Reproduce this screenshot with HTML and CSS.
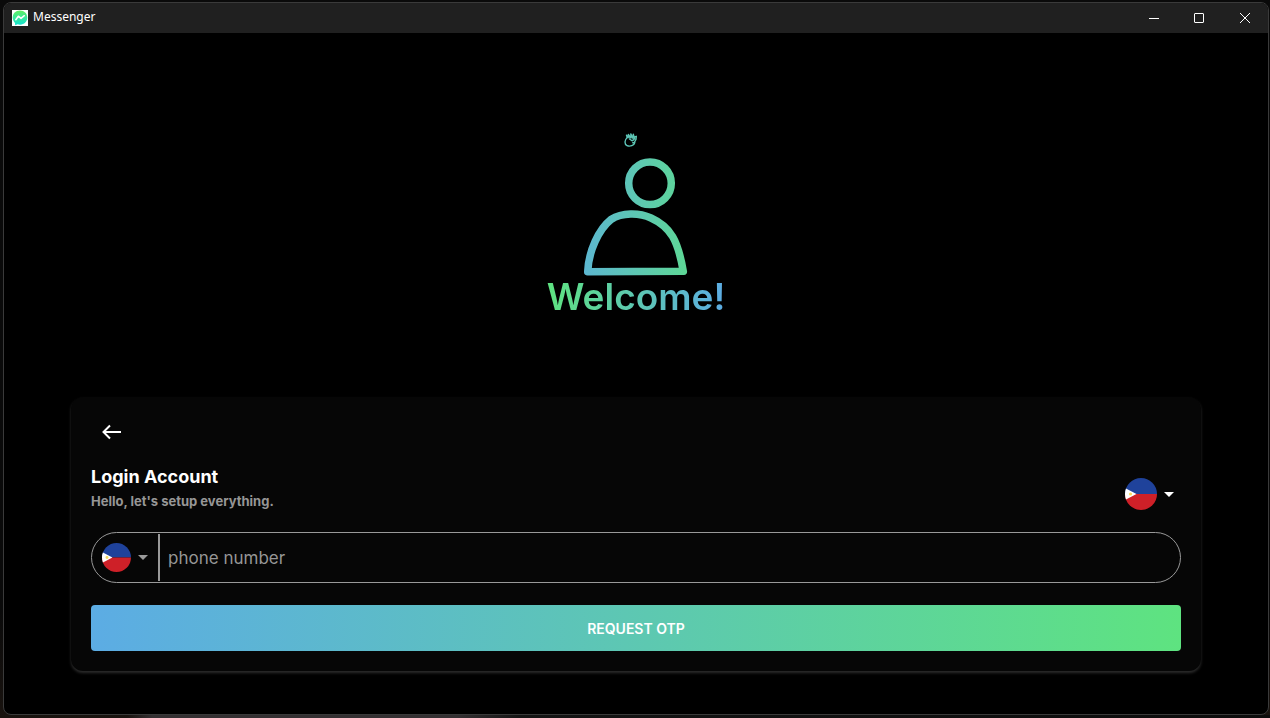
FILE: index.html
```html
<!DOCTYPE html>
<html lang="en">
<head>
<meta charset="utf-8">
<title>Messenger</title>
<link rel="stylesheet" href="styles.css">
</head>
<body>
<svg width="0" height="0" class="defs" aria-hidden="true">
  <symbol id="flag" viewBox="0 0 32 32">
    <clipPath id="disc"><circle cx="16" cy="16" r="16"/></clipPath>
    <g clip-path="url(#disc)">
      <rect width="32" height="16" fill="#1f429b"/>
      <rect y="16" width="32" height="16" fill="#ce2028"/>
      <path d="M-1 9.500L11.500 16L-1 22.500z" fill="#fff"/>
      <circle cx="5.500" cy="16" r="1.600" fill="#f8dc60"/>
    </g>
  </symbol>
</svg>
<div class="window">
  <header class="titlebar">
    <svg class="app-icon" viewBox="0 0 16 16" aria-hidden="true">
      <defs><linearGradient id="app" x1="0" y1="0" x2="0" y2="1"><stop offset="0" stop-color="#62ee62"/><stop offset="1" stop-color="#10e3d5"/></linearGradient></defs>
      <rect width="16" height="16" fill="#fff"/>
      <path d="M8 .5C3.600 .5.700 3.600.700 7.600c0 2.200.9 4 2.300 5.300l.2 2.400 2.400-1c.8.3 1.600.4 2.400.4 4.400 0 7.300-3.100 7.300-7.100S12.400.5 8 .5z" fill="url(#app)"/>
      <path d="M3.800 9.700L6.300 6.200L9 8.400L12.300 5.700" fill="none" stroke="#fff" stroke-width="1.500" stroke-linejoin="round" stroke-linecap="round"/>
    </svg>
    <span class="app-name">Messenger</span>
    <button class="win-btn" aria-label="Minimize"><svg viewBox="0 0 12 12"><path d="M2 6.500H12"/></svg></button>
    <button class="win-btn" aria-label="Maximize"><svg viewBox="0 0 12 12"><rect x="1.500" y="1.500" width="9" height="9" rx=".5"/></svg></button>
    <button class="win-btn" aria-label="Close"><svg viewBox="0 0 12 12"><path d="M1 1L11 11M11 1L1 11"/></svg></button>
  </header>
  <main class="content">
    <section class="hero">
      <svg class="person" viewBox="576 130 120 147" fill="none" aria-hidden="true">
        <defs><linearGradient id="body" gradientUnits="userSpaceOnUse" x1="550" y1="0" x2="725" y2="0"><stop offset="0" stop-color="#5cace4"/><stop offset="1" stop-color="#5ee380"/></linearGradient></defs>
        <g stroke="url(#body)" stroke-linejoin="round" stroke-linecap="round">
          <circle cx="650" cy="184.300" r="21.300" stroke-width="7.500"/>
          <path d="M587.700 272.800C588.500 252 599 230 611 220.500C622 213.500 639 213.500 651 219C671 228 678 242 683.300 272.300Z" stroke-width="7.500"/>
          <g stroke-width="1.400">
            <path d="M627.300 138.500C624.300 141 624.300 145.500 627 146.600C630 148 634.200 146.500 634.800 143.600L632.800 143.800"/>
            <path d="M627.300 138.500L626.500 136.200L629 138.500M629 138.500L628.300 135.400L631 139M631 138.500L630.800 134.900L633 139.500M633 138.300L633.300 135.300L634.600 140M634.600 138L636.300 137.300L636 140.500L634.300 143.400M629.500 140L632 141.800L633.500 140.800"/>
          </g>
        </g>
      </svg>
      <h1 class="welcome">Welcome!</h1>
    </section>
    <form class="card">
      <button type="button" class="back" aria-label="Back">
        <svg viewBox="0 0 20 16"><path d="M19 8H2M8 1.500L1.500 8L8 14.500"/></svg>
      </button>
      <div class="heading">
        <div>
          <h2 class="title">Login Account</h2>
          <p class="subtitle">Hello, let's setup everything.</p>
        </div>
        <div class="picker region">
          <svg class="flag"><use href="#flag"/></svg>
          <svg class="caret" viewBox="0 0 10 5"><path d="M0 0H10L5 5z"/></svg>
          <select aria-label="Region"><option value="PH">PH</option></select>
        </div>
      </div>
      <div class="phone">
        <div class="picker code">
          <svg class="flag"><use href="#flag"/></svg>
          <svg class="caret" viewBox="0 0 10 5"><path d="M0 0H10L5 5z"/></svg>
          <select aria-label="Country code"><option value="PH">PH</option></select>
        </div>
        <input type="tel" placeholder="phone number" aria-label="phone number">
      </div>
      <button type="submit" class="submit">REQUEST OTP</button>
    </form>
  </main>
</div>
</body>
</html>
```
FILE: styles.css
```css
* { box-sizing: border-box; }
body {
  margin: 0;
  min-height: 100vh;
  padding: 2px 1px 3px 3px;
  display: flex;
  background: linear-gradient(90deg, transparent 10%, #343032 12%, #343032 36%, #141414 41%, #0c0c0c 100%) bottom / 100% 3px no-repeat, linear-gradient(#0a0a0a 85%, #19130f);
  color: #fff;
  font-family: Inter, "Liberation Sans", sans-serif;
}
button, input { font: inherit; color: inherit; }
button { padding: 0; border: 0; background: none; }
.defs { position: absolute; }
.window {
  flex: 1;
  display: flex;
  flex-direction: column;
  border: 1px solid #3a3a3a;
  border-radius: 8px;
  overflow: hidden;
  background: #000;
}
.titlebar {
  display: flex;
  align-items: center;
  height: 30px;
  padding-left: 8px;
  background: #202020;
}
.app-icon { width: 16px; height: 16px; }
.app-name {
  flex: 1;
  padding-bottom: 2px;
  margin-left: 5px;
  font: 12px/16px "Noto Sans", "Open Sans", sans-serif;
}
.win-btn { display: grid; place-items: center; width: 46px; height: 28px; }
.win-btn svg { width: 12px; height: 12px; fill: none; stroke: #fff; }
.content {
  flex: 1;
  display: flex;
  flex-direction: column;
  padding: 0 67px 43px;
}
.hero {
  flex: 1;
  display: flex;
  flex-direction: column;
  align-items: center;
  justify-content: center;
  padding-top: 17px;
}
.person { width: 120px; height: 147px; }
.welcome {
  margin: 0;
  font-size: 37px;
  font-weight: 600;
  line-height: 42px;
  background: linear-gradient(90deg, #5ee380, #5cace4);
  background-clip: text;
  -webkit-background-clip: text;
  color: transparent;
}
.card {
  display: flex;
  flex-direction: column;
  padding: 20px;
  border-radius: 12px;
  background: #060606;
  box-shadow: 0 2px 3px #2c2c2c;
}
.back { display: grid; place-items: center; width: 42px; height: 30px; }
.back svg { width: 20px; height: 16px; fill: none; stroke: #fff; stroke-width: 2; }
.heading {
  display: flex;
  align-items: center;
  justify-content: space-between;
  height: 64px;
  margin: 9px 0 12px;
}
.title { margin: 0; font-size: 18px; font-weight: 700; line-height: 24px; }
.subtitle { margin: 2px 0 0; font-size: 13px; font-weight: 700; line-height: 20px; color: #969696; }
.picker { position: relative; display: flex; align-items: center; }
.picker select { position: absolute; inset: 0; width: 100%; opacity: 0; }
.caret { width: 10px; height: 5px; fill: currentColor; }
.region { gap: 7px; padding-right: 7px; margin-top: 12px; }
.region .flag { width: 32px; height: 32px; }
.phone {
  display: flex;
  height: 51px;
  padding: 1px 24px 1px 10px;
  border: 1px solid #999;
  border-radius: 26px;
}
.code { gap: 7px; padding-right: 10px; border-right: 2px solid #999; color: #999; }
.code .flag { width: 29px; height: 29px; }
.phone input {
  flex: 1;
  min-width: 0;
  padding: 0 8px;
  border: 0;
  outline: 0;
  background: none;
  font-size: 17px;
}
.phone input::placeholder { color: #969696; opacity: 1; }
.submit {
  height: 46px;
  margin-top: 22px;
  border-radius: 4px;
  background: linear-gradient(90deg, #5cace4, #5ee380);
  font-size: 14px;
  font-weight: 600;
}
```
